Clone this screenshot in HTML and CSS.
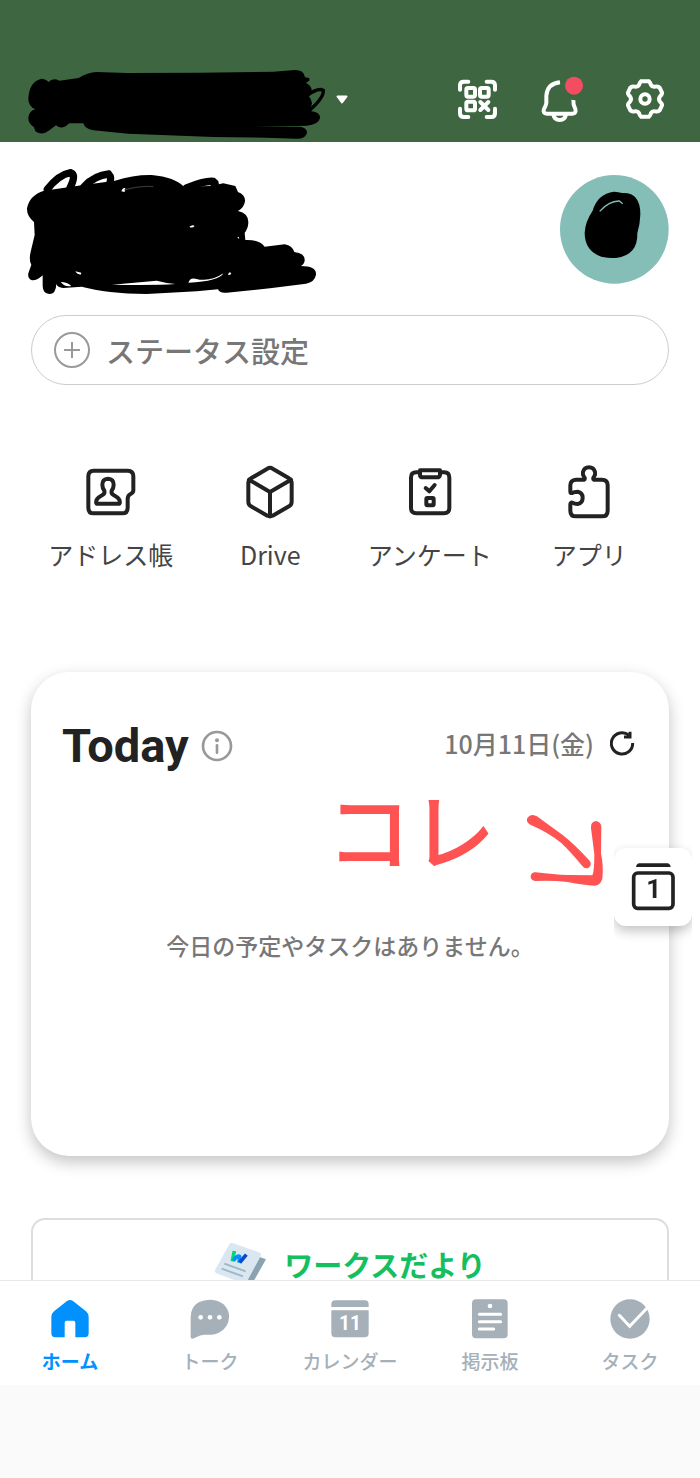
FILE: index.html
```html
<!DOCTYPE html>
<html lang="ja">
<head>
  <meta charset="UTF-8">
  <meta name="viewport" content="width=device-width, initial-scale=1.0">
  <title>ホーム</title>
  <link rel="stylesheet" href="styles.css">
</head>
<body>
  <header class="header">
    <button type="button" class="account" aria-label="アカウント">
      <svg class="account-name" viewBox="78 54 906 186">
        <path d="M125 86Q140 88 146 96Q158 82 178 92L236 84Q262 68 290 66L380 69L600 68L820 65L885 60Q912 60 915 82L928 84L928 92L918 98Q936 108 935 122L924 134Q934 146 936 160L930 183Q962 186 960 204Q956 224 920 227L760 231L900 230Q922 234 921 248Q918 266 890 266L800 263L640 261L385 251L280 241Q254 236 250 220L208 220Q186 242 168 226L146 242Q126 258 106 244L102 232Q84 220 85 202Q88 182 106 178Q84 168 85 145Q88 94 125 86Z"/>
        <path class="ink-line" d="M922 136Q955 112 970 121Q972 142 930 180"/>
      </svg>
      <svg class="caret" viewBox="0 0 12 9"><path d="M1.5 1.5h9L6 7.5z"/></svg>
    </button>
    <nav class="header-actions">
      <button type="button" aria-label="QR">
        <svg class="icon-qr" viewBox="72 54 126 126">
          <path d="M81 89V76Q81 65 92 65H106M161 65H175Q186 65 186 76V89M186 146V159Q186 171 175 171H161M106 171H92Q81 171 81 159V146"/>
          <rect x="100" y="84" width="26" height="26" rx="5"/>
          <rect x="141" y="84" width="26" height="26" rx="5"/>
          <rect x="100" y="125" width="26" height="26" rx="5"/>
          <path class="dots" d="M142 126L166 150M166 126L142 150"/>
        </svg>
      </button>
      <button type="button" aria-label="通知">
        <svg class="icon-bell" viewBox="328 45 138 138">
          <path d="M391 64Q353 68 350 104V126Q349 134 343 144Q338 157 352 158H428Q441 157 437 144Q430 132 431 117"/>
          <path d="M371 160Q374 177 390 177T409 160"/>
          <circle cx="433" cy="74" r="27"/>
        </svg>
      </button>
      <button type="button" aria-label="設定">
        <svg class="icon-gear" viewBox="586 58 120 120">
          <path d="M634 65H658Q662 68 664 76Q668 83 677 81Q686 79 690 84L697 99Q698 104 691 110Q685 118 691 126Q698 132 697 137L690 152Q686 157 677 155Q668 153 664 160Q662 168 658 171H634Q630 168 628 160Q624 153 615 155Q606 157 602 152L595 137Q594 132 601 126Q607 118 601 110Q594 104 595 99L602 84Q606 79 615 81Q624 83 628 76Q630 68 634 65Z"/>
          <circle cx="646" cy="118" r="14"/>
        </svg>
      </button>
    </nav>
  </header>

  <main class="content">
    <section class="profile">
      <svg class="profile-name" viewBox="48 12 876 390">
        <path d="M102 92L215 76L315 62Q370 44 425 45Q495 52 522 80L600 78L640 70L676 78L684 96Q706 104 705 124Q702 144 684 153Q716 160 715 188Q714 206 704 218L706 240Q748 238 764 260L824 253Q848 258 853 276Q886 280 884 302Q882 314 872 318Q920 318 918 344Q914 366 888 371L780 385L650 398Q628 400 624 388L560 394L410 402Q290 400 215 380L160 384Q142 382 139 372Q138 402 118 402Q98 400 98 378L98 346Q82 362 66 361Q52 356 55 340L64 314Q56 300 62 275L74 225L72 186Q50 168 51 145Q58 106 102 92Z"/>
        <path class="ink-line" d="M112 88Q146 44 182 38Q200 44 180 84M222 80Q254 46 296 42Q308 54 296 78M530 84Q582 62 610 64Q620 70 612 82"/>
        <path class="ink-gap" d="M306 374L440 362Q470 370 496 372Q440 376 306 374ZM535 368Q540 352 556 356Q600 368 640 340Q628 364 535 368ZM152 366Q172 366 184 378Q164 382 152 366ZM538 200Q548 192 554 198Q546 206 538 200ZM196 334L214 338L212 344Q202 344 196 334ZM334 94Q338 82 346 84L344 96ZM654 342L660 336L664 342L656 346ZM682 232L686 230L688 238Z"/>
        <path class="ink-shine" d="M344 90Q390 76 430 80"/>
      </svg>
      <svg class="avatar" viewBox="60 41 327 327">
        <circle cx="223" cy="204" r="163"/>
        <path d="M222 91Q236 92 246 95Q302 92 301 160Q300 190 292 216Q294 282 228 290Q200 290 184 286Q134 268 134 214Q136 180 158 148Q172 98 222 91Z"/>
        <path class="avatar-shine" d="M179 150Q208 118 238 119L248 127"/>
      </svg>
    </section>

    <button type="button" class="status">
      <svg class="icon-plus" viewBox="0 0 36 36"><circle cx="18" cy="18" r="17"/><path d="M18 10v16M10 18h16"/></svg>
      <span>ステータス設定</span>
    </button>

    <nav class="quick">
      <a href="#">
        <svg viewBox="162 42 168 168">
          <path d="M194 62H296Q313 62 313 79V121Q313 128 306 131Q296 136 296 146V173Q296 190 279 190H194Q178 190 178 173V79Q178 62 194 62Z"/>
          <path d="M237 86Q254 87 254 104Q254 114 248 122Q246 130 252 134L266 143Q276 152 271 161H203Q198 152 208 143L222 134Q228 130 226 122Q220 114 220 104Q220 87 237 86Z"/>
        </svg>
        <span>アドレス帳</span>
      </a>
      <a href="#">
        <svg viewBox="637 42 168 168">
          <path d="M713 56Q721 51 729 56L778 85Q786 90 786 99V155Q786 164 778 169L729 197Q721 202 713 197L664 169Q656 164 656 155V99Q656 90 664 85ZM658 89L721 126L784 89M721 126V198"/>
        </svg>
        <span>Drive</span>
      </a>
      <a href="#">
        <svg viewBox="155 42 168 168">
          <path d="M206 67H198Q182 67 182 83V174Q182 190 198 190H281Q297 190 297 174V83Q297 67 281 67H272M209 61H269V74Q268 82 260 82H218Q209 82 209 74Z"/>
          <path d="M226 114L237 124L253 105"/>
          <rect x="228" y="144" width="22" height="22" rx="3"/>
        </svg>
        <span>アンケート</span>
      </a>
      <a href="#">
        <svg viewBox="634 42 168 168">
          <path d="M703 89H679Q662 90 662 106V125Q662 130 667 129Q674 125 684 125Q699 128 699 143Q699 159 684 162Q674 162 668 158Q662 157 662 163V182Q662 199 679 199H757Q774 199 774 182V106Q774 89 757 89H733Q728 86 733 80Q738 74 736 66Q732 52 718 52T700 66Q698 74 703 80Q708 86 703 89Z"/>
        </svg>
        <span>アプリ</span>
      </a>
    </nav>

    <section class="today">
      <div class="today-head">
        <h1>Today</h1>
        <button type="button" aria-label="情報">
          <svg class="icon-info" viewBox="534 212 96 96"><circle class="ring" cx="582" cy="260" r="42"/><circle cx="582" cy="243" r="6"/><path d="M582 258V280"/></svg>
        </button>
        <div class="date">
          <time datetime="10-11">10月11日(金)</time>
          <button type="button" aria-label="更新">
            <svg class="icon-refresh" viewBox="870 26 84 84"><path d="M938 68A32 32 0 1 1 927 45"/><path d="M912 50H930V34"/></svg>
          </button>
        </div>
      </div>
      <p class="empty">今日の予定やタスクはありません。</p>
      <div class="memo">
        <span>コレ</span>
        <svg viewBox="612 270 240 228">
          <path d="M636 279Q648 280 660 292L724 338Q760 366 806 416Q814 428 803 437Q792 442 784 432Q750 390 720 362Q680 330 628 308Q614 300 619 288Q626 278 636 279Z"/>
          <path d="M825 297Q840 300 841 314L840 395Q848 430 844 470Q838 490 820 491Q790 490 740 480Q690 474 642 477Q628 474 629 462Q632 450 644 451Q700 458 740 459L814 460Q820 450 820 396L810 318Q808 300 825 297Z"/>
        </svg>
      </div>
    </section>

    <a href="#" class="news">
      <svg class="icon-news" viewBox="645 330 162 144">
        <path class="paper-back" d="M780 380L801 388L752 474L715 474Z"/>
        <path class="paper" d="M698 338L785 369Q787 374 784 380L742 458Q738 462 732 460L652 430Q646 426 648 420L690 344Q693 338 698 338Z"/>
        <path class="paper-line" d="M676 401L740 424M668 416L732 439"/>
        <path class="w-green" d="M706 363L700 394"/>
        <path class="w-blue" d="M703 392Q716 374 722 380L720 398"/>
        <path class="w-navy" d="M722 398L742 374"/>
      </svg>
      <span>ワークスだより</span>
    </a>
  </main>

  <button type="button" class="float" aria-label="カレンダー">
    <svg viewBox="927 429 144 144">
      <path class="lid" d="M948 441Q950 430 958 430H1042Q1050 430 1052 441Z"/>
      <rect x="941" y="459" width="118" height="106" rx="12"/>
      <text x="1001" y="535">1</text>
    </svg>
  </button>

  <nav class="tabs">
    <a href="#" class="active">
      <svg viewBox="150 506 120 120"><path d="M201 512Q210 506 219 512L258 543Q266 550 266 560V609Q266 621 254 621H226V577Q226 571 220 571H200Q194 571 194 577V621H166Q154 621 154 609V560Q154 550 162 543Z"/></svg>
      <span>ホーム</span>
    </a>
    <a href="#">
      <svg viewBox="570 506 120 120"><path d="M630 508Q660 508 676 528Q688 542 687 561Q686 582 672 596Q656 612 634 613H612Q600 614 590 620Q572 630 572 620V561Q572 530 596 516Q612 508 630 508Z"/><g class="cut"><circle cx="602" cy="561" r="7"/><circle cx="630" cy="561" r="7"/><circle cx="658" cy="561" r="7"/></g></svg>
      <span>トーク</span>
    </a>
    <a href="#">
      <svg viewBox="990 506 120 120"><path d="M994 530V522Q994 510 1006 510H1094Q1106 510 1106 522V530ZM994 540H1106V609Q1106 621 1094 621H1006Q994 621 994 609Z"/><text x="1050" y="598">11</text></svg>
      <span>カレンダー</span>
    </a>
    <a href="#">
      <svg viewBox="360 506 120 120"><rect x="366" y="507" width="107" height="117" rx="12"/><circle class="cut" cx="420" cy="527" r="7"/><path class="cut-line" d="M388 552H452M388 574H452M388 596H431"/></svg>
      <span>掲示板</span>
    </a>
    <a href="#">
      <svg viewBox="780 506 120 120"><circle cx="840" cy="566" r="59"/><path class="cut-line" d="M808 555L839 588L892 532"/></svg>
      <span>タスク</span>
    </a>
  </nav>
</body>
</html>
```
FILE: styles.css
```css
*{
  box-sizing: border-box;
}

body{
  display: flex;
  flex-direction: column;
  height: 100vh;
  margin: 0;
  background-color: #fafafa;
  font-family: "Noto Sans CJK JP", sans-serif;
  color: #222;
}

a{
  color: inherit;
  text-decoration: none;
}

button{
  padding: 0;
  border: 0;
  background: none;
  font: inherit;
  color: inherit;
}

svg{
  display: block;
  flex: none;
}

/* header */
.header{
  display: flex;
  flex: none;
  align-items: center;
  justify-content: space-between;
  padding: 68px 35px 12px 26px;
  background-color: #3e6741;
}

.account{
  display: flex;
  align-items: center;
  gap: 8px;
}

.account-name{
  width: 302px;
  height: 62px;
  overflow: visible;
}

.ink-line{
  fill: none;
  stroke: #000;
  stroke-width: 22;
  stroke-linecap: round;
}

.account-name .ink-line{
  stroke-width: 10;
}

.caret{
  width: 12px;
  height: 9px;
  fill: #fff;
  stroke: #fff;
  stroke-width: 2;
  stroke-linejoin: round;
}

.header-actions{
  display: flex;
  align-items: center;
  gap: 40px;
}

.header-actions svg{
  fill: none;
  stroke: #fff;
  stroke-width: 12;
}

.header-actions .icon-qr{
  width: 42px;
  height: 42px;
  stroke-linecap: round;
}

.icon-bell{
  width: 46px;
  height: 46px;
}

.icon-bell circle{
  fill: #f44d61;
  stroke: none;
}

.icon-gear{
  width: 40px;
  height: 40px;
}

/* scroll area between header and tabs */
.content{
  display: flex;
  flex: 1;
  flex-direction: column;
  min-height: 0;
  padding: 0 31px;
  overflow-y: auto;
  scrollbar-width: none;
  background-color: #fff;
}

.content > *{
  flex: none;
}

.profile{
  display: flex;
  align-items: center;
  justify-content: space-between;
  margin-left: -5px;
  padding: 22px 0 21px;
}

.profile-name{
  width: 292px;
  height: 130px;
}

.ink-gap{
  fill: #fff;
}

.ink-shine{
  fill: none;
  stroke: #333;
  stroke-width: 4;
}

.avatar{
  width: 109px;
  height: 109px;
}

.avatar circle{
  fill: #84beb7;
}

.avatar-shine{
  fill: none;
  stroke: #84beb7;
  stroke-width: 4;
}

.status{
  display: flex;
  align-items: center;
  gap: 16px;
  height: 70px;
  padding: 0 22px;
  border: 1px solid #ccc;
  border-radius: 35px;
  font-size: 29px;
  font-weight: 500;
  color: #777;
}

.icon-plus{
  width: 36px;
  height: 36px;
  fill: none;
  stroke: #999;
  stroke-width: 2;
}

.quick{
  display: grid;
  grid-template-columns: repeat(4, 1fr);
  padding-top: 79px;
}

.quick a{
  display: flex;
  flex-direction: column;
  align-items: center;
  gap: 16px;
  font-size: 25px;
  line-height: 36px;
  color: #444;
}

.quick svg{
  width: 56px;
  height: 56px;
  fill: none;
  stroke: #222;
  stroke-width: 12;
  stroke-linecap: round;
  stroke-linejoin: round;
}

.today{
  position: relative;
  display: flex;
  flex-direction: column;
  min-height: 484px;
  margin-top: 100px;
  padding: 44px 31px 42px;
  border-radius: 38px;
  background-color: #fff;
  box-shadow: 0 6px 16px rgba(0, 0, 0, .24);
}

.today-head{
  display: flex;
  align-items: center;
}

.today h1{
  margin: 0 12px 0 0;
  font-family: Roboto, "Noto Sans CJK JP", sans-serif;
  font-size: 47px;
  line-height: 60px;
}

.icon-info{
  width: 32px;
  height: 32px;
  fill: #999;
}

.icon-info .ring{
  fill: none;
}

.icon-info .ring,
.icon-info path{
  stroke: #999;
  stroke-width: 8;
  stroke-linecap: round;
}

.date{
  display: flex;
  align-items: center;
  gap: 16px;
  margin-left: auto;
  padding-bottom: 6px;
  font-size: 25px;
  font-weight: 500;
  color: #777;
}

.icon-refresh{
  width: 28px;
  height: 28px;
  fill: none;
  stroke: #222;
  stroke-width: 9;
}

.empty{
  margin: auto;
  font-size: 23px;
  font-weight: 500;
  color: #777;
}

/* handwritten note over the card */
.memo{
  position: absolute;
  top: 108px;
  right: 64px;
  display: flex;
  gap: 30px;
  font-size: 84px;
  line-height: 96px;
  color: #ff5252;
  -webkit-text-stroke: 2px #ff5252;
}

.memo svg{
  width: 80px;
  height: 76px;
  margin-top: 32px;
  fill: #ff5252;
}

.news{
  display: flex;
  align-items: center;
  justify-content: center;
  gap: 16px;
  margin-top: 62px;
  padding: 20px;
  border: 2px solid #ddd;
  border-radius: 14px;
  font-size: 29px;
  font-weight: bold;
  line-height: 48px;
  color: #14bf60;
}

.icon-news{
  width: 54px;
  height: 48px;
  fill: none;
}

.icon-news .paper{
  fill: #dae6f0;
}

.icon-news .paper-back{
  fill: #8aa3b0;
}

.paper-line{
  stroke: #9db8c6;
  stroke-width: 6;
}

.w-green,
.w-blue,
.w-navy{
  stroke-width: 11;
}

.w-green{
  stroke: #03d772;
}

.w-blue{
  stroke: #0091ff;
}

.w-navy{
  stroke: #0848d0;
}

/* floating calendar button */
.float{
  position: fixed;
  right: 8px;
  bottom: 552px;
  display: grid;
  place-items: center;
  width: 78px;
  height: 78px;
  border-radius: 12px;
  background-color: #fff;
  box-shadow: 0 5px 12px rgba(0, 0, 0, .24);
  clip-path: inset(-6px 0 -20px 0);
}

.float svg{
  width: 48px;
  height: 48px;
  overflow: visible;
}

.float rect{
  fill: none;
  stroke: #222;
  stroke-width: 11;
}

.float text{
  font-family: Roboto, sans-serif;
  font-size: 78px;
  font-weight: bold;
  text-anchor: middle;
}

.float .lid,
.float text{
  fill: #222;
}

/* bottom tabs */
.tabs{
  display: grid;
  flex: none;
  grid-template-columns: repeat(5, 1fr);
  height: 105px;
  margin-bottom: 93px;
  padding-top: 18px;
  border-top: 1px solid #e8e8e8;
  background-color: #fff;
}

.tabs a{
  display: flex;
  flex-direction: column;
  align-items: center;
  gap: 8px;
  font-size: 19px;
  font-weight: 500;
  line-height: 28px;
  color: #a5b0b9;
}

.tabs .active{
  font-weight: bold;
  color: #0091ff;
}

.tabs svg{
  width: 40px;
  height: 40px;
  fill: currentColor;
}

.tabs .cut,
.tabs text{
  fill: #fff;
}

.tabs text{
  font-family: Roboto, sans-serif;
  font-size: 58px;
  font-weight: bold;
  text-anchor: middle;
}

.tabs .cut-line{
  fill: none;
  stroke: #fff;
  stroke-width: 9;
  stroke-linecap: round;
}
```
